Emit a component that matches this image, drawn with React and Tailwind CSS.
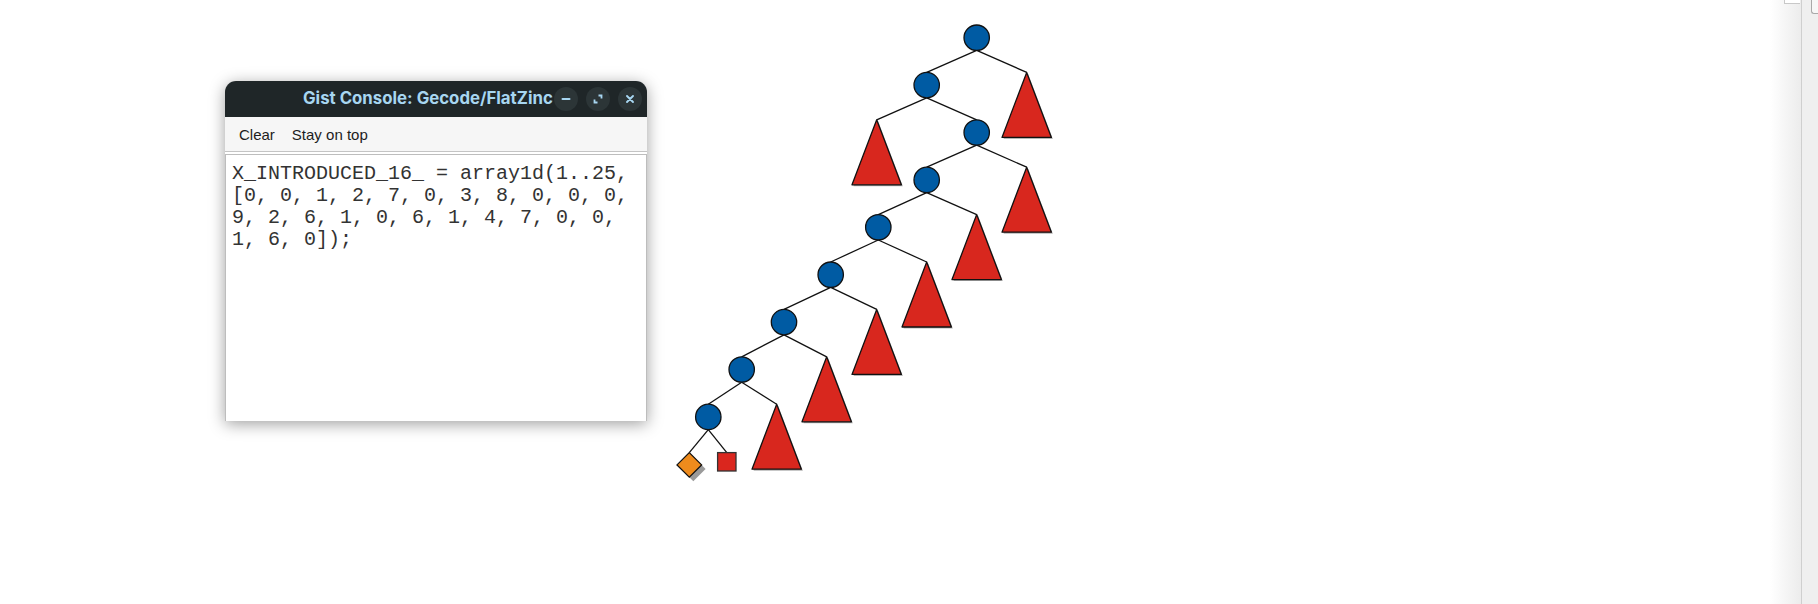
import React from 'react';

const Y0 = 37.7;
const DY = 47.4;
const R = 12.7;
const TRI_H = 65;
const TRI_W = 24.7;

// spine of open nodes, top to bottom
const spine = [976.7, 926.7, 976.7, 926.7, 878.3, 830.7, 784, 741.7, 708.3];
// hidden subtree (triangle) hanging off each spine node
const hidden = [1026.7, 876.7, 1026.7, 976.7, 926.7, 876.7, 826.7, 776.7];

const levelY = (i) => Y0 + DY * i;

function SearchTree() {
  const lines = [];
  const shapes = [];

  spine.forEach((x, i) => {
    const y = levelY(i);
    if (i < hidden.length) {
      const cy = levelY(i + 1) - R;
      lines.push([x, y + R, spine[i + 1], cy]);
      lines.push([x, y + R, hidden[i], cy]);
      const tx = hidden[i];
      shapes.push(
        <g key={`t${i}`}>
          <polygon
            points={`${tx + 1.5},${cy + 1.5} ${tx - TRI_W + 1.5},${cy + TRI_H + 1.5} ${tx + TRI_W + 1.5},${cy + TRI_H + 1.5}`}
            fill="#b5b5b5"
          />
          <polygon
            points={`${tx},${cy} ${tx - TRI_W},${cy + TRI_H} ${tx + TRI_W},${cy + TRI_H}`}
            fill="#d8271e"
            stroke="#111"
            strokeWidth="1.3"
            strokeLinejoin="round"
          />
        </g>
      );
    }
    shapes.push(
      <circle key={`c${i}`} cx={x} cy={y} r={R} fill="#005ba3" stroke="#111" strokeWidth="1.3" />
    );
  });

  // leaves of the last open node
  const last = spine[spine.length - 1];
  const ly = levelY(spine.length - 1);
  const dx = 689.3;
  const dy = levelY(spine.length) + 0.6;
  const sx = 726.8;
  lines.push([last, ly + R, dx, dy - 12.3]);
  lines.push([last, ly + R, sx, dy - 12.3]);

  return (
    <svg width="1770" height="604" className="block">
      {lines.map(([x1, y1, x2, y2], i) => (
        <line key={i} x1={x1} y1={y1} x2={x2} y2={y2} stroke="#111" strokeWidth="1.3" />
      ))}
      {shapes}
      {/* current node: solution diamond with shadow */}
      <polygon
        points={`${dx + 4},${dy - 12.3 + 4} ${dx + 12.3 + 4},${dy + 4} ${dx + 4},${dy + 12.3 + 4} ${dx - 12.3 + 4},${dy + 4}`}
        fill="#9a9a9a"
      />
      <polygon
        points={`${dx},${dy - 12.3} ${dx + 12.3},${dy} ${dx},${dy + 12.3} ${dx - 12.3},${dy}`}
        fill="#ee8b1d"
        stroke="#111"
        strokeWidth="1.3"
      />
      <rect x={sx - 9.2} y={dy - 12.3} width="18.4" height="18.4" fill="#da261e" stroke="#333" strokeWidth="1.3" />
    </svg>
  );
}

function TitleButton({ children }) {
  return (
    <div className="flex h-[24px] w-[24px] items-center justify-center rounded-full bg-[#2c3537]">
      {children}
    </div>
  );
}

function ConsoleWindow() {
  return (
    <div className="absolute left-[225px] top-[81px] flex h-[340px] w-[422px] flex-col rounded-t-[11px] bg-white shadow-[0_3px_16px_rgba(0,0,0,0.38)]">
      {/* Header */}
      <div className="flex h-[36px] items-center rounded-t-[11px] bg-[#1f2628] pr-[5px]">
        <div className="flex-1 overflow-hidden pl-[78px] font-['Inter',sans-serif] text-[16.8px] font-bold text-[#a7d6f1] whitespace-nowrap">
          Gist Console: Gecode/FlatZinc
        </div>
        <div className="flex items-center gap-[8px]">
          <TitleButton>
            <svg width="10" height="10" viewBox="0 0 10 10">
              <path d="M1.5 5h7" stroke="#a7d6f1" strokeWidth="2" strokeLinecap="round" />
            </svg>
          </TitleButton>
          <TitleButton>
            <svg width="10" height="10" viewBox="0 0 10 10">
              <path d="M5.5 1.5h3v3M1.5 5.5v3h3" fill="none" stroke="#a7d6f1" strokeWidth="1.8" />
            </svg>
          </TitleButton>
          <TitleButton>
            <svg width="10" height="10" viewBox="0 0 10 10">
              <path d="M2 2l6 6M8 2l-6 6" stroke="#a7d6f1" strokeWidth="1.9" strokeLinecap="round" />
            </svg>
          </TitleButton>
        </div>
      </div>

      {/* Toolbar */}
      <div className="flex h-[35px] items-center gap-[17px] border-b border-[#c4c4c4] bg-[#f6f6f6] pl-[14px] pt-[2px] font-['Liberation_Sans',sans-serif] text-[15px] text-[#1d1d1d]">
        <span>Clear</span>
        <span>Stay on top</span>
      </div>

      {/* Output */}
      <div className="mt-[2px] flex-1 border-t border-l border-r border-[#bdbdbd] bg-white px-[6px] pt-[8px] font-['Liberation_Mono',monospace] text-[20px] leading-[22px] text-[#333] whitespace-pre">
        {'X_INTRODUCED_16_ = array1d(1..25,\n[0, 0, 1, 2, 7, 0, 3, 8, 0, 0, 0,\n9, 2, 6, 1, 0, 6, 1, 4, 7, 0, 0,\n1, 6, 0]);'}
      </div>
    </div>
  );
}

export default function App() {
  return (
    <div className="flex h-[604px] w-[1818px] overflow-hidden bg-white">
      {/* Canvas */}
      <div className="relative w-[1770px]">
        <SearchTree />
        <ConsoleWindow />
      </div>

      {/* Scroll edge */}
      <div className="flex w-[31px] justify-end bg-[linear-gradient(to_right,#ffffff,#ececec)]">
        <div className="mr-[1px] h-[4px] w-[16px] border-b border-l border-[#c8c8c8] bg-white" />
      </div>
      <div className="w-[1px] bg-[#cfcfcf]" />
      <div className="flex w-[16px] justify-end bg-[#efefef]">
        <div className="h-[14px] w-[7px] rounded-bl-[3px] border-b border-l border-[#a9a9a9] bg-[#f7f7f7]" />
      </div>
    </div>
  );
}
